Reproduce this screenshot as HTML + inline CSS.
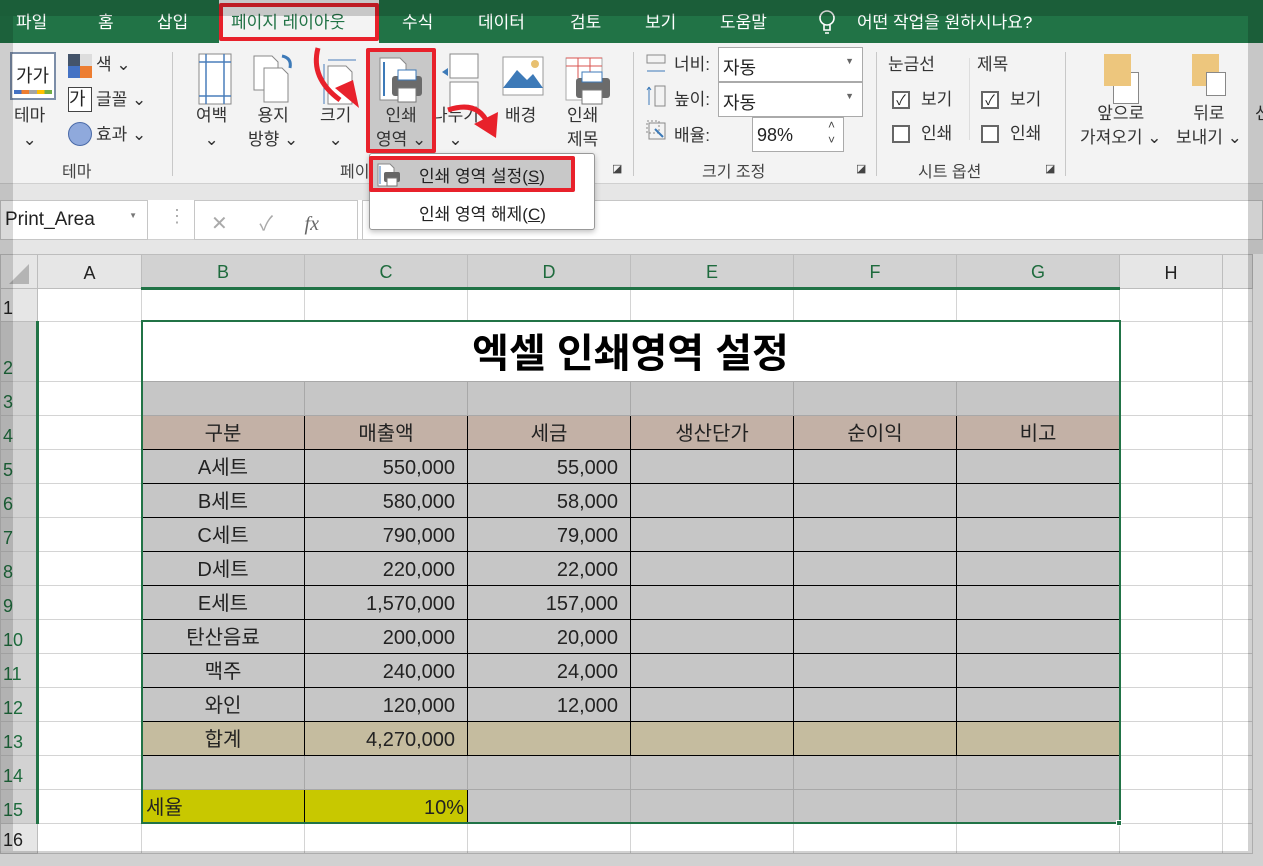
<!DOCTYPE html>
<html><head><meta charset="utf-8"><style>
*{margin:0;padding:0;box-sizing:border-box}
body{width:1263px;height:866px;overflow:hidden;position:relative;background:#fff;font-family:"Liberation Sans","Noto Sans CJK KR",sans-serif;color:#222}
.a{position:absolute;white-space:nowrap}
.tab{position:absolute;top:8px;font-size:17px;color:#fff}
.rl{position:absolute;font-size:17px;color:#333;text-align:center;line-height:24px}
.grp{position:absolute;top:158px;font-size:16px;color:#444}
.sep{position:absolute;top:52px;width:1px;height:124px;background:#c8c8c8}
table{position:absolute;left:0;top:254px;border-collapse:collapse;table-layout:fixed}
td{padding:2px 4px 0;font-size:20px;line-height:26px;border:1px solid #d4d4d4;overflow:hidden;white-space:nowrap}
td.h{background:#e6e6e6;text-align:center;font-size:18px;color:#222;border-color:#bdbdbd}
td.hs{background:#d2d2d2;color:#1e6b3d;border-bottom:3px solid #217346}
td.rn{background:#e6e6e6;text-align:left;font-size:18px;padding-left:2px;vertical-align:bottom;border-color:#bdbdbd}
td.rs{background:#d2d2d2;color:#1e6b3d;border-right:3px solid #217346}
.g{background:#c6c6c6;border-color:#a8a8a8}
.k{border:1px solid #000}
.p{background:#c3b1a6;text-align:center}
.t{background:#c5bc9f}
.y{background:#c8c800;border:1px solid #000}
.c{text-align:center}.r{text-align:right;padding-right:12px}
.cb{position:absolute;width:18px;height:18px;border:2px solid #666;background:#fff}
</style></head><body>
<div class="a" style="left:0;top:0;width:1263px;height:43px;background:#217346"></div>
<div class="a" style="left:219px;top:0;width:160px;height:43px;background:#f3f3f3"></div>
<div class="tab" style="left:16px">파일</div>
<div class="tab" style="left:98px">홈</div>
<div class="tab" style="left:157px">삽입</div>
<div class="tab" style="left:231px;color:#217346">페이지 레이아웃</div>
<div class="tab" style="left:402px">수식</div>
<div class="tab" style="left:478px">데이터</div>
<div class="tab" style="left:570px">검토</div>
<div class="tab" style="left:645px">보기</div>
<div class="tab" style="left:720px">도움말</div>
<svg class="a" style="left:818px;top:9px" width="18" height="26"><circle cx="9" cy="9" r="7" fill="none" stroke="#fff" stroke-width="1.6"/><path d="M6 16v5h6v-5M7 24h4" stroke="#fff" stroke-width="1.6" fill="none"/></svg>
<div class="tab" style="left:857px">어떤 작업을 원하시나요?</div>
<div class="a" style="left:0;top:43px;width:1263px;height:140px;background:#f3f3f3"></div>
<div class="a" style="left:0;top:183px;width:1263px;height:17px;background:#e6e6e6;border-top:1px solid #d0d0d0"></div>
<div class="a" style="left:10px;top:52px;width:46px;height:48px;border:2px solid #7c8ea8;background:#fff;font-size:18px;padding:8px 0 0 4px">가가</div>
<div class="a" style="left:14px;top:90px;width:38px;height:4px;background:linear-gradient(90deg,#4472c4 20%,#ed7d31 20% 40%,#a5a5a5 40% 60%,#ffc000 60% 80%,#70ad47 80%)"></div>
<div class="rl" style="left:14px;top:104px">테마<br>⌄</div>
<div class="a" style="left:68px;top:54px;width:24px;height:24px;background:linear-gradient(90deg,#44546a 50%,#ddd 50%)"></div>
<div class="a" style="left:68px;top:66px;width:24px;height:12px;background:linear-gradient(90deg,#4472c4 50%,#ed7d31 50%)"></div>
<div class="rl" style="left:96px;top:53px">색 ⌄</div>
<div class="a" style="left:68px;top:87px;width:24px;height:25px;border:1px solid #444;background:#fff;font-size:18px;line-height:22px">가</div>
<div class="rl" style="left:96px;top:88px">글꼴 ⌄</div>
<div class="a" style="left:68px;top:122px;width:24px;height:24px;border-radius:50%;background:#8fa9dc;border:1px solid #4a6aa8"></div>
<div class="rl" style="left:96px;top:123px">효과 ⌄</div>
<div class="grp" style="left:62px">테마</div>
<div class="sep" style="left:172px"></div>
<svg class="a" style="left:198px;top:52px" width="36" height="68"><rect x="1" y="2" width="32" height="50" fill="#fff" stroke="#888"/><path d="M8 2v50M26 2v50M1 10h32M1 44h32" stroke="#4a7ebb" stroke-width="1.5"/></svg>
<div class="rl" style="left:196px;top:104px">여백<br>⌄</div>
<svg class="a" style="left:252px;top:54px" width="50" height="66"><path d="M2 2h18l6 6v28H2z" fill="#fff" stroke="#888"/><path d="M12 14h18l6 6v28H12z" fill="#fff" stroke="#888"/><path d="M30 2q10 2 8 12" stroke="#3d7ab8" stroke-width="3" fill="none"/></svg>
<div class="rl" style="left:248px;top:104px">용지<br>방향 ⌄</div>
<svg class="a" style="left:320px;top:58px" width="40" height="60"><path d="M8 2h28M4 6v40" stroke="#4a7ebb"/><path d="M8 8h18l6 6v32H8z" fill="#fff" stroke="#888"/></svg>
<div class="rl" style="left:320px;top:104px">크기<br>⌄</div>
<div class="a" style="left:370px;top:51px;width:62px;height:98px;background:#c8c8c8"></div>
<svg class="a" style="left:378px;top:56px" width="48" height="50"><path d="M2 2h20l6 6v36H2z" fill="#fff" stroke="#888"/><path d="M6 6v34" stroke="#3d7ab8" stroke-width="2"/><rect x="14" y="20" width="30" height="20" rx="3" fill="#6b6b6b"/><rect x="20" y="14" width="18" height="10" fill="#fff" stroke="#3d7ab8"/><rect x="20" y="32" width="18" height="14" fill="#fff" stroke="#777"/></svg>
<div class="rl" style="left:376px;top:104px">인쇄<br>영역 ⌄</div>
<svg class="a" style="left:440px;top:52px" width="40" height="66"><rect x="10" y="2" width="28" height="24" fill="#fff" stroke="#888"/><rect x="10" y="30" width="28" height="26" fill="#fff" stroke="#888"/><path d="M2 20l6 -4v8z" fill="#3d7ab8"/></svg>
<div class="rl" style="left:432px;top:104px">나누기<br>⌄</div>
<svg class="a" style="left:502px;top:56px" width="44" height="42"><rect x="1" y="1" width="40" height="38" fill="#fff" stroke="#999"/><path d="M1 32l14-18 10 10 6-6 10 14z" fill="#3d7ab8"/><circle cx="33" cy="8" r="4" fill="#e8c070"/></svg>
<div class="rl" style="left:505px;top:104px">배경</div>
<svg class="a" style="left:564px;top:56px" width="50" height="52"><rect x="2" y="2" width="36" height="42" fill="#fff" stroke="#aaa"/><path d="M2 2h36M2 10h36M14 2v20M26 2v20" stroke="#d9534f"/><rect x="12" y="22" width="34" height="20" rx="3" fill="#6b6b6b"/><rect x="18" y="16" width="20" height="10" fill="#fff" stroke="#3d7ab8"/><rect x="18" y="34" width="20" height="14" fill="#fff" stroke="#777"/></svg>
<div class="rl" style="left:567px;top:104px">인쇄<br>제목</div>
<div class="grp" style="left:340px">페이</div>
<div class="a" style="left:612px;top:162px;font-size:11px;color:#444">◪</div>
<div class="sep" style="left:633px"></div>
<svg class="a" style="left:645px;top:53px" width="24" height="110"><rect x="2" y="2" width="18" height="8" fill="none" stroke="#888"/><path d="M2 18h18M4 18l-2 0" stroke="#3d7ab8"/><path d="M4 34v18M4 34l-2 3M4 34l2 3" stroke="#3d7ab8"/><rect x="10" y="33" width="10" height="20" fill="none" stroke="#888"/><rect x="2" y="68" width="12" height="12" fill="none" stroke="#888" stroke-dasharray="2"/><rect x="4" y="70" width="16" height="16" fill="none" stroke="#888"/><path d="M18 84l-8-8" stroke="#3d7ab8" stroke-width="2"/></svg>
<div class="rl" style="left:674px;top:53px">너비:</div>
<div class="rl" style="left:674px;top:88px">높이:</div>
<div class="rl" style="left:674px;top:124px">배율:</div>
<div class="a" style="left:718px;top:47px;width:145px;height:35px;border:1px solid #aaa;background:#fff;font-size:18px;padding:6px 4px">자동<span style="position:absolute;right:8px;top:8px;font-size:9px;color:#666">▼</span></div>
<div class="a" style="left:718px;top:82px;width:145px;height:35px;border:1px solid #aaa;background:#fff;font-size:18px;padding:6px 4px">자동<span style="position:absolute;right:8px;top:8px;font-size:9px;color:#666">▼</span></div>
<div class="a" style="left:752px;top:117px;width:92px;height:35px;border:1px solid #aaa;background:#fff;font-size:18px;padding:7px 4px">98%<span style="position:absolute;right:8px;top:0;font-size:12px;line-height:15px;color:#444">˄<br>˅</span></div>
<div class="grp" style="left:702px">크기 조정</div>
<div class="a" style="left:856px;top:162px;font-size:11px;color:#444">◪</div>
<div class="sep" style="left:876px"></div>
<div class="rl" style="left:888px;top:53px">눈금선</div>
<div class="rl" style="left:977px;top:53px">제목</div>
<div class="cb" style="left:892px;top:91px;font-size:14px;line-height:14px;text-align:center">✓</div>
<div class="rl" style="left:921px;top:88px">보기</div>
<div class="cb" style="left:981px;top:91px;font-size:14px;line-height:14px;text-align:center">✓</div>
<div class="rl" style="left:1010px;top:88px">보기</div>
<div class="cb" style="left:892px;top:125px"></div>
<div class="rl" style="left:921px;top:122px">인쇄</div>
<div class="cb" style="left:981px;top:125px"></div>
<div class="rl" style="left:1010px;top:122px">인쇄</div>
<div class="a" style="left:969px;top:58px;width:1px;height:82px;background:#ddd"></div>
<div class="grp" style="left:918px">시트 옵션</div>
<div class="a" style="left:1045px;top:162px;font-size:11px;color:#444">◪</div>
<div class="sep" style="left:1065px"></div>
<div class="a" style="left:1113px;top:72px;width:26px;height:32px;background:#fff;border:1px solid #888"></div>
<div class="a" style="left:1104px;top:54px;width:27px;height:32px;background:#edc67d"></div>
<div class="a" style="left:1192px;top:54px;width:27px;height:32px;background:#edc67d"></div>
<div class="a" style="left:1206px;top:72px;width:20px;height:24px;background:#fff;border:1px solid #888"></div>
<div class="rl" style="left:1080px;top:102px;text-align:center">앞으로<br>가져오기 ⌄</div>
<div class="rl" style="left:1176px;top:102px;text-align:center">뒤로<br>보내기 ⌄</div>
<div class="rl" style="left:1255px;top:102px">선</div>
<div class="a" style="left:0;top:200px;width:1263px;height:40px;background:#fff;border-bottom:1px solid #d0d0d0"></div>
<div class="a" style="left:0;top:200px;width:148px;height:40px;border:1px solid #c6c6c6;font-size:19px;padding:8px 4px;color:#222">Print_Area<span style="position:absolute;right:10px;top:10px;font-size:8px;color:#777">▼</span></div>
<div class="a" style="left:168px;top:206px;font-size:18px;color:#aaa">⋮</div>
<div class="a" style="left:194px;top:200px;width:164px;height:40px;border:1px solid #c6c6c6;font-size:20px;color:#aaa;padding:6px 0 0 16px;word-spacing:26px">✕ ✓ <i style="font-family:'Liberation Serif',serif;color:#666">fx</i></div>
<div class="a" style="left:362px;top:200px;width:901px;height:40px;border:1px solid #c6c6c6"></div>
<div class="a" style="left:0;top:240px;width:1263px;height:14px;background:#e6e6e6"></div>
<table>
<colgroup><col style="width:37px"><col style="width:104px"><col style="width:163px"><col style="width:163px"><col style="width:163px"><col style="width:163px"><col style="width:163px"><col style="width:163px"><col style="width:103px"><col style="width:30px"></colgroup>
<tr style="height:34px"><td class="h" style="background:#e6e6e6"><svg width="24" height="24" style="vertical-align:bottom"><path d="M22 2v20H2z" fill="#b4b4b4"/></svg></td><td class="h">A</td><td class="h hs">B</td><td class="h hs">C</td><td class="h hs">D</td><td class="h hs">E</td><td class="h hs">F</td><td class="h hs">G</td><td class="h">H</td><td class="h"></td></tr>
<tr style="height:33px"><td class="rn">1</td><td></td><td></td><td></td><td></td><td></td><td></td><td></td><td></td><td></td></tr>
<tr style="height:60px"><td class="rn rs">2</td><td></td><td colspan="6" style="text-align:center;font-size:40px;line-height:48px;height:60px;font-weight:bold;color:#000;border-color:#fff #d4d4d4 #a8a8a8;padding:4px 0 0">엑셀 인쇄영역 설정</td><td></td><td></td></tr>
<tr style="height:34px"><td class="rn rs">3</td><td></td><td class="g"></td><td class="g"></td><td class="g"></td><td class="g"></td><td class="g"></td><td class="g"></td><td></td><td></td></tr>
<tr style="height:34px"><td class="rn rs">4</td><td></td><td class="p k">구분</td><td class="p k">매출액</td><td class="p k">세금</td><td class="p k">생산단가</td><td class="p k">순이익</td><td class="p k">비고</td><td></td><td></td></tr>
<tr style="height:34px"><td class="rn rs">5</td><td></td><td class="g k c">A세트</td><td class="g k r">550,000</td><td class="g k r">55,000</td><td class="g k"></td><td class="g k"></td><td class="g k"></td><td></td><td></td></tr>
<tr style="height:34px"><td class="rn rs">6</td><td></td><td class="g k c">B세트</td><td class="g k r">580,000</td><td class="g k r">58,000</td><td class="g k"></td><td class="g k"></td><td class="g k"></td><td></td><td></td></tr>
<tr style="height:34px"><td class="rn rs">7</td><td></td><td class="g k c">C세트</td><td class="g k r">790,000</td><td class="g k r">79,000</td><td class="g k"></td><td class="g k"></td><td class="g k"></td><td></td><td></td></tr>
<tr style="height:34px"><td class="rn rs">8</td><td></td><td class="g k c">D세트</td><td class="g k r">220,000</td><td class="g k r">22,000</td><td class="g k"></td><td class="g k"></td><td class="g k"></td><td></td><td></td></tr>
<tr style="height:34px"><td class="rn rs">9</td><td></td><td class="g k c">E세트</td><td class="g k r">1,570,000</td><td class="g k r">157,000</td><td class="g k"></td><td class="g k"></td><td class="g k"></td><td></td><td></td></tr>
<tr style="height:34px"><td class="rn rs">10</td><td></td><td class="g k c">탄산음료</td><td class="g k r">200,000</td><td class="g k r">20,000</td><td class="g k"></td><td class="g k"></td><td class="g k"></td><td></td><td></td></tr>
<tr style="height:34px"><td class="rn rs">11</td><td></td><td class="g k c">맥주</td><td class="g k r">240,000</td><td class="g k r">24,000</td><td class="g k"></td><td class="g k"></td><td class="g k"></td><td></td><td></td></tr>
<tr style="height:34px"><td class="rn rs">12</td><td></td><td class="g k c">와인</td><td class="g k r">120,000</td><td class="g k r">12,000</td><td class="g k"></td><td class="g k"></td><td class="g k"></td><td></td><td></td></tr>
<tr style="height:34px"><td class="rn rs">13</td><td></td><td class="t k c">합계</td><td class="t k r">4,270,000</td><td class="t k"></td><td class="t k"></td><td class="t k"></td><td class="t k"></td><td></td><td></td></tr>
<tr style="height:34px"><td class="rn rs">14</td><td></td><td class="g"></td><td class="g"></td><td class="g"></td><td class="g"></td><td class="g"></td><td class="g"></td><td></td><td></td></tr>
<tr style="height:34px"><td class="rn rs">15</td><td></td><td class="y">세율</td><td class="y r" style="padding-right:3px">10%</td><td class="g"></td><td class="g"></td><td class="g"></td><td class="g"></td><td></td><td></td></tr>
<tr style="height:30px"><td class="rn">16</td><td></td><td></td><td></td><td></td><td></td><td></td><td></td><td></td><td></td></tr>
</table>
<div class="a" style="left:141px;top:320px;width:980px;height:504px;border:2px solid #217346"></div>
<div class="a" style="left:1116px;top:820px;width:6px;height:6px;background:#217346;border:1px solid #fff"></div>
<div class="a" style="left:369px;top:153px;width:226px;height:77px;background:#fff;border:1px solid #999;border-radius:3px;box-shadow:0 2px 6px rgba(0,0,0,.25)"></div>
<div class="a" style="left:371px;top:158px;width:202px;height:33px;background:#c8c8c8"></div>
<svg class="a" style="left:376px;top:162px" width="28" height="26"><path d="M2 2h12l4 4v18H2z" fill="#fff" stroke="#888"/><path d="M4 4v18" stroke="#3d7ab8"/><rect x="8" y="10" width="16" height="10" rx="2" fill="#666"/><rect x="11" y="16" width="10" height="8" fill="#fff" stroke="#777"/></svg>
<div class="a" style="left:419px;top:162px;font-size:17px;color:#222">인쇄 영역 설정(<u>S</u>)</div>
<div class="a" style="left:419px;top:200px;font-size:17px;color:#222">인쇄 영역 해제(<u>C</u>)</div>
<div class="a" style="left:219px;top:3px;width:160px;height:38px;border:4px solid #e8212b;border-radius:2px"></div>
<div class="a" style="left:366px;top:48px;width:70px;height:105px;border:4px solid #e8212b;border-radius:2px"></div>
<div class="a" style="left:369px;top:156px;width:206px;height:36px;border:4px solid #e8212b;border-radius:2px"></div>
<svg class="a" style="left:0;top:0" width="640" height="160"><path d="M318 48q-8 30 22 52" stroke="#e8212b" stroke-width="5" fill="none"/><path d="M335 88l24 20-6-28z" fill="#e8212b"/><path d="M448 110q30-10 40 14" stroke="#e8212b" stroke-width="5" fill="none"/><path d="M474 124l22 14 2-26z" fill="#e8212b"/></svg>
<div class="a" style="left:0;top:0;width:1263px;height:16px;background:rgba(0,0,0,.18)"></div>
<div class="a" style="left:0;top:16px;width:13px;height:835px;background:rgba(0,0,0,.15)"></div>
<div class="a" style="left:1248px;top:16px;width:15px;height:835px;background:rgba(0,0,0,.18)"></div>
<div class="a" style="left:0;top:851px;width:1263px;height:15px;background:rgba(0,0,0,.18)"></div>
</body></html>
